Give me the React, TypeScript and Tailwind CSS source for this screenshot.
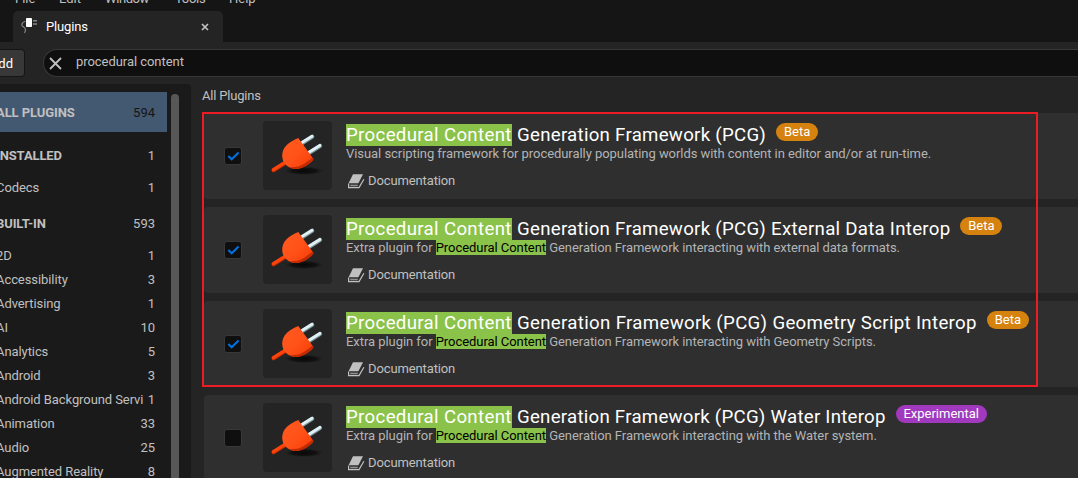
import React from "react";

const menus = [
  { label: "File", cls: "left-[15px]" },
  { label: "Edit", cls: "left-[59px]" },
  { label: "Window", cls: "left-[105px] tracking-[-0.4px]" },
  { label: "Tools", cls: "left-[175px] tracking-[-0.3px]" },
  { label: "Help", cls: "left-[229px]" },
];

type Category = { name: string; count: number; kind?: "header" | "selected" };

const categories: Category[] = [
  { name: "ALL PLUGINS", count: 594, kind: "selected" },
  { name: "INSTALLED", count: 1, kind: "header" },
  { name: "Codecs", count: 1 },
  { name: "BUILT-IN", count: 593, kind: "header" },
  { name: "2D", count: 1 },
  { name: "Accessibility", count: 3 },
  { name: "Advertising", count: 1 },
  { name: "AI", count: 10 },
  { name: "Analytics", count: 5 },
  { name: "Android", count: 3 },
  { name: "Android Background Servi", count: 1 },
  { name: "Animation", count: 33 },
  { name: "Audio", count: 25 },
  { name: "Augmented Reality", count: 8 },
];

type Plugin = {
  title: string;
  tracking: string;
  before: string;
  match: string;
  after: string;
  badge: "Beta" | "Experimental";
  enabled: boolean;
};

const plugins: Plugin[] = [
  {
    title: "Generation Framework (PCG)",
    tracking: "tracking-[0.27px]",
    before: "Visual scripting framework for procedurally populating worlds with content in editor and/or at run-time.",
    match: "",
    after: "",
    badge: "Beta",
    enabled: true,
  },
  {
    title: "Generation Framework (PCG) External Data Interop",
    tracking: "tracking-[0.27px]",
    before: "Extra plugin for ",
    match: "Procedural Content",
    after: " Generation Framework interacting with external data formats.",
    badge: "Beta",
    enabled: true,
  },
  {
    title: "Generation Framework (PCG) Geometry Script Interop",
    tracking: "tracking-[0.32px]",
    before: "Extra plugin for ",
    match: "Procedural Content",
    after: " Generation Framework interacting with Geometry Scripts.",
    badge: "Beta",
    enabled: true,
  },
  {
    title: "Generation Framework (PCG) Water Interop",
    tracking: "tracking-[0.25px]",
    before: "Extra plugin for ",
    match: "Procedural Content",
    after: " Generation Framework interacting with the Water system.",
    badge: "Experimental",
    enabled: false,
  },
];

function PlugArt() {
  return (
    <svg className="block size-[69px]" viewBox="0 0 69 69">
      <defs>
        <linearGradient id="plug-body" x1="0" y1="0" x2="1" y2="1">
          <stop offset="0" stopColor="#ff5a20" />
          <stop offset="0.5" stopColor="#ff5219" />
          <stop offset="0.75" stopColor="#fc460e" />
          <stop offset="1" stopColor="#e03604" />
        </linearGradient>
        <radialGradient id="plug-shadow">
          <stop offset="0" stopColor="#080808" />
          <stop offset="0.6" stopColor="#0e0e0e" stopOpacity="0.85" />
          <stop offset="1" stopColor="#242424" stopOpacity="0" />
        </radialGradient>
      </defs>
      <ellipse cx="41" cy="49.8" rx="21" ry="4.6" fill="url(#plug-shadow)" />
      <path d="M39 22.3 L49.2 15.8" stroke="#7b9196" strokeWidth="4.2" strokeLinecap="round" />
      <path d="M39 21.5 L49 15.3" stroke="#dff1f4" strokeWidth="3" strokeLinecap="round" />
      <path d="M46 32 L57 24.9" stroke="#7b9196" strokeWidth="4.2" strokeLinecap="round" />
      <path d="M46 31.2 L56.8 24.4" stroke="#dff1f4" strokeWidth="3" strokeLinecap="round" />
      <path d="M10.5 49.2 L22 42" stroke="#c92c00" strokeWidth="4.2" strokeLinecap="round" />
      <path d="M10.4 48.6 L22 41.4" stroke="#fb430c" strokeWidth="3.2" strokeLinecap="round" />
      <path d="M35.3 17 L50.5 38 L49 40.3 C44 44.5 39 48 32.5 48 C25 47.5 19.2 42.5 19.2 34.5 C19.2 26 26 21 35.3 17 Z" fill="url(#plug-body)" />
      <path d="M49.5 36.7 L50.5 38.2 L49 40.5 C44 44.6 39 48.1 32 48 C29 47.8 27.5 47 26 46 C34 47 39 44.5 43 41.5 Z" fill="#c42a00" />
    </svg>
  );
}

function BookIcon() {
  return (
    <svg className="block h-[15px] w-[17px] shrink-0" viewBox="0 0 17 15">
      <path d="M5 0.3 H15 L10.4 9.2 H0.6 Z" fill="#c0c0c0" />
      <path d="M0.6 9.6 V13.6 H11 L15.9 5.2" fill="none" stroke="#c0c0c0" strokeWidth="1.2" />
      <path d="M2.2 11.5 H9.8" stroke="#909090" strokeWidth="1.6" />
    </svg>
  );
}

function Checkbox({ checked }: { checked: boolean }) {
  return (
    <div className="flex size-[18px] items-center justify-center rounded-[3px] border border-[#383838] bg-[#0f0f0f]">
      {checked && (
        <svg className="block h-[10px] w-[13px]" viewBox="0 0 13 10">
          <path d="M1.3 4.9 L4.7 8.2 L11.6 1.4" fill="none" stroke="#0070e0" strokeWidth="2.1" />
        </svg>
      )}
    </div>
  );
}

function PluginCard({ p }: { p: Plugin }) {
  return (
    <div className="flex h-[86px] shrink-0 rounded-l-[4px] bg-[#2f2f2f]">
      <div className="flex w-[59px] items-center pl-5">
        <Checkbox checked={p.enabled} />
      </div>
      <div className="mt-2 size-[69px] shrink-0 overflow-hidden rounded-[4px] bg-[#242424]">
        <PlugArt />
      </div>
      <div className="ml-[14px] flex flex-col whitespace-pre pt-[9px]">
        <div className="flex h-[24px] items-start">
          <div className="mt-[2px] flex h-[22px] items-center text-[18.67px] leading-[22px] text-white">
            <span className="h-[22px] w-[166px] bg-[#8bc24a] tracking-[0.33px]">Procedural Content</span>
            <span className={`ml-[5px] ${p.tracking}`}>{p.title}</span>
          </div>
          {p.badge === "Beta" ? (
            <span className="ml-[10px] mt-px h-[18px] w-[42px] rounded-full bg-[#d5820e] text-center text-[13px] leading-[18px] text-white">Beta</span>
          ) : (
            <span className="ml-[10px] mt-px h-[18px] w-[91px] rounded-full bg-[#a139bf] text-center text-[13px] leading-[18px] text-white">Experimental</span>
          )}
        </div>
        <div className="flex h-[15px] items-center text-[13px] leading-[15px] tracking-[-0.055px] text-[#b4b4b4]">
          <span>{p.before}</span>
          {p.match && <span className="bg-[#8bc24a] text-black">{p.match}</span>}
          <span>{p.after}</span>
        </div>
        <div className="mt-[12px] flex h-[16px] items-center gap-[3px] pl-[2px] text-[13px] leading-4 tracking-[-0.12px] text-[#c0c0c0]">
          <BookIcon />
          <span>Documentation</span>
        </div>
      </div>
    </div>
  );
}

function CategoryRow({ c }: { c: Category }) {
  if (c.kind === "selected") {
    return (
      <div className="flex h-10 w-[167px] shrink-0 items-center justify-between bg-[#435871] pr-3 pt-[2px]">
        <span className="-ml-[4px] font-bold tracking-[-0.08px] text-[#c0c0c0]">{c.name}</span>
        <span className="text-[#151515]">{c.count}</span>
      </div>
    );
  }
  if (c.kind === "header") {
    return (
      <div className="mt-1 flex h-10 w-[167px] shrink-0 items-center justify-between pr-3">
        <span className="-ml-[4px] font-bold tracking-[-0.12px]">{c.name}</span>
        <span>{c.count}</span>
      </div>
    );
  }
  return (
    <div className="flex h-6 w-[167px] shrink-0 items-center justify-between whitespace-nowrap pr-3">
      <span className="-ml-[4px] tracking-[-0.08px]">{c.name}</span>
      <span>{c.count}</span>
    </div>
  );
}

export default function App() {
  return (
    <div className="relative flex h-[478px] w-[1078px] flex-col overflow-hidden bg-[#242424] font-['Roboto',sans-serif] text-[13px] text-[#c0c0c0]">
      <div className="relative flex h-[42px] shrink-0 items-end bg-[#151515]">
        {menus.map((m) => (
          <span key={m.label} className={`absolute -top-[9px] leading-4 ${m.cls}`}>{m.label}</span>
        ))}
        <div className="ml-[13px] flex h-[31px] w-[210px] items-center rounded-t-[5px] bg-[#242424] pl-[8px] pr-[14px] text-white">
          <svg className="-mt-[3px] block h-[17px] w-[17px]" viewBox="0 0 17 17">
            <path d="M4.4 4.3 C0.2 5.6 0 8.4 2.3 9.8 C5 11.4 5 13.5 3.4 15.8" fill="none" stroke="#858585" strokeWidth="1.2" />
            <rect x="5" y="1" width="6" height="9" rx="0.8" fill="#fff" />
            <path d="M12 3.8 H16 M12 7 H16" stroke="#858585" strokeWidth="1.4" />
          </svg>
          <span className="ml-2 tracking-[-0.15px]">Plugins</span>
          <svg className="ml-auto block size-[8px]" viewBox="0 0 8 8">
            <path d="M1 1 L7 7 M7 1 L1 7" stroke="#c0c0c0" strokeWidth="1.7" />
          </svg>
        </div>
      </div>

      <div className="flex h-[42px] shrink-0 items-center">
        <div className="flex h-[28px] w-[25px] items-center justify-end rounded-r-[4px] border border-l-0 border-[#151515] bg-[#383838] pr-[11px] pt-[2px] text-white">
          Add
        </div>
        <div className="ml-[18px] flex h-[28px] flex-1 items-center rounded-l-full border border-r-0 border-[#383838] bg-[#0f0f0f]">
          <svg className="ml-[5px] block size-[13px]" viewBox="0 0 13 13">
            <path d="M1 1 L12 12 M12 1 L1 12" stroke="#c0c0c0" strokeWidth="1.8" />
          </svg>
          <span className="-mt-[2px] ml-[14px] tracking-[-0.05px]">procedural content</span>
        </div>
      </div>

      <div className="flex min-h-0 flex-1">
        <aside className="flex w-[191px] shrink-0 overflow-hidden rounded-tr-[4px] bg-[#1a1a1a]">
          <div className="flex w-[171px] flex-col pt-2">
            {categories.map((c) => (
              <CategoryRow key={c.name} c={c} />
            ))}
          </div>
          <div className="mt-[10px] w-2 rounded-t-full bg-[#575757]" />
        </aside>
        <main className="flex flex-1 flex-col overflow-hidden pl-[13px]">
          <div className="-ml-[2px] h-[29px] shrink-0 pt-[4px] leading-4 tracking-[-0.2px]">All Plugins</div>
          <div className="flex flex-col gap-2">
            {plugins.map((p) => (
              <PluginCard key={p.title} p={p} />
            ))}
          </div>
        </main>
      </div>

      <div className="absolute left-[202px] top-[112px] h-[275px] w-[836px] border-2 border-[#ed1c24]" />
    </div>
  );
}
